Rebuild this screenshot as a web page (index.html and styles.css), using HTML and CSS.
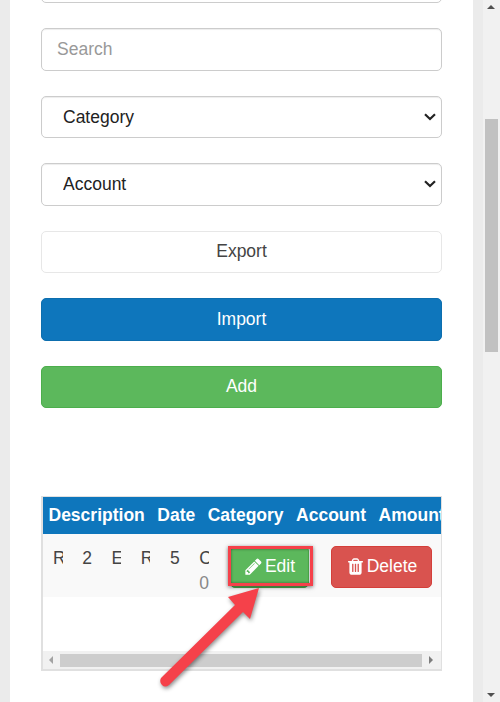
FILE: index.html
```html
<!DOCTYPE html>
<html lang="en">
<head>
    <meta charset="UTF-8">
    <meta name="viewport" content="width=device-width, initial-scale=1.0">
    <title>Transactions</title>
    <link rel="stylesheet" href="styles.css">
</head>
<body>
  <div class="page">
    <div class="card">
      <div class="controls">
        <input class="field" type="text">
        <input class="field search" type="text" placeholder="Search">
        <div class="choice-wrap">
          <select class="field choice"><option>Category</option></select>
          <svg class="chevron" viewBox="0 0 12 8"><path d="M1 1.2 L6 6 L11 1.2"/></svg>
        </div>
        <div class="choice-wrap">
          <select class="field choice"><option>Account</option></select>
          <svg class="chevron" viewBox="0 0 12 8"><path d="M1 1.2 L6 6 L11 1.2"/></svg>
        </div>
        <button class="btn btn-export">Export</button>
        <button class="btn btn-import">Import</button>
        <button class="btn btn-add">Add</button>
      </div>

      <div class="table-box">
        <div class="table-scroll">
          <table class="head-table">
            <thead>
              <tr><th>Description</th><th>Date</th><th>Category</th><th>Account</th><th>Amount</th></tr>
            </thead>
          </table>
          <table class="body-table">
            <tbody>
              <tr>
                <td class="narrow"><div class="cut">R</div></td>
                <td class="narrow"><div class="cut">2</div></td>
                <td class="narrow"><div class="cut">E</div></td>
                <td class="narrow"><div class="cut">R</div></td>
                <td class="narrow"><div class="cut">5</div></td>
                <td class="narrow"><div class="cut">C</div><div class="cut muted">0</div></td>
                <td class="actions">
                  <div class="action-row">
                    <button class="row-btn row-edit">
                      <svg class="icon" viewBox="0 0 1792 1792"><path d="M491 1536l91-91-235-235-91 91v107h128v128h107zm523-928q0-22-22-22-10 0-17 7l-542 542q-7 7-7 17 0 22 22 22 10 0 17-7l542-542q7-7 7-17zm-54-192l416 416-832 832h-416v-416zm683 96q0 53-37 90l-166 166-416-416 166-165q36-38 90-38 53 0 91 38l235 234q37 39 37 91z"/></svg>
                      Edit
                    </button>
                    <button class="row-btn row-delete">
                      <svg class="icon" viewBox="0 0 1792 1792"><path d="M704 1376v-704q0-14-9-23t-23-9h-64q-14 0-23 9t-9 23v704q0 14 9 23t23 9h64q14 0 23-9t9-23zm256 0v-704q0-14-9-23t-23-9h-64q-14 0-23 9t-9 23v704q0 14 9 23t23 9h64q14 0 23-9t9-23zm256 0v-704q0-14-9-23t-23-9h-64q-14 0-23 9t-9 23v704q0 14 9 23t23 9h64q14 0 23-9t9-23zm-544-992h448l-48-117q-7-9-17-11h-317q-10 2-17 11zm928 32v64q0 14-9 23t-23 9h-96v948q0 83-47 143.5t-113 60.5h-832q-66 0-113-58.5t-47-141.5v-952h-96q-14 0-23-9t-9-23v-64q0-14 9-23t23-9h309l70-167q15-37 54-63t79-26h320q40 0 79 26t54 63l70 167h309q14 0 23 9t9 23z"/></svg>
                      Delete
                    </button>
                  </div>
                </td>
              </tr>
            </tbody>
          </table>
        </div>
        <div class="hbar">
          <span class="tri tri-left"></span>
          <div class="hbar-thumb"></div>
          <span class="tri tri-right"></span>
        </div>
      </div>
    </div>

    <div class="vbar">
      <span class="tri tri-up"></span>
      <div class="vbar-thumb"></div>
      <span class="tri tri-down"></span>
    </div>

    <!-- annotation drawn over the screenshot -->
    <div class="mark-box"></div>
    <svg class="mark-arrow" width="500" height="702" viewBox="0 0 500 702">
      <path d="M259 588 L228 597 L235 605 L161 678 Q159 682 162 685 Q165 688 169 685 L243 612 L250 619 Z"/>
    </svg>
  </div>
</body>
</html>
```

FILE: styles.css
```css
* {
  box-sizing: border-box;
}
html, body {
  height: 100%;
}
body {
  margin: 0;
  background-color: #ebebeb;
  font-family: "Liberation Sans", Arial, sans-serif;
  font-size: 17.5px;
  line-height: 25px;
  color: #333;
  overflow: hidden;
}

.page {
  position: relative;
  display: flex;
  justify-content: space-between;
  height: 702px;
  overflow: hidden;
}
.card {
  width: 463px;
  height: 702px;
  margin-left: 10px;
  padding: 0 31px;
  background: #fff;
}

.controls {
  display: flex;
  flex-direction: column;
  gap: 25px;
  margin-top: -39.5px;
}
.field {
  display: block;
  width: 100%;
  height: 42.5px;
  padding: 0 15px;
  border: 1px solid #ccc;
  border-radius: 5px;
  background: #fff;
  color: #222;
  font-family: inherit;
  font-size: 17.5px;
  box-shadow: inset 0 1px 1px rgba(0, 0, 0, 0.075);
}
.field::placeholder {
  color: #999;
}
.choice-wrap {
  position: relative;
}
.choice {
  appearance: none;
  padding: 0 21px;
}
.chevron {
  position: absolute;
  top: 17px;
  right: 6px;
  width: 12px;
  height: 8px;
  fill: none;
  stroke: #222;
  stroke-width: 2.2;
  pointer-events: none;
}

.btn {
  width: 100%;
  height: 42.5px;
  border: 1px solid transparent;
  border-radius: 5px;
  font-family: inherit;
  font-size: 17.5px;
  cursor: pointer;
}
.btn-export {
  background: #fff;
  border-color: #e7e7e7;
  color: #444;
}
.btn-import {
  background: #0e76bc;
  border-color: #0d6eae;
  color: #fff;
}
.btn-add {
  background: #5cb85c;
  border-color: #4cae4c;
  color: #fff;
}

.table-box {
  display: flex;
  flex-direction: column;
  height: 175px;
  margin-top: 88px;
  border: 2px solid #e0e0e0;
  border-right-width: 1px;
  border-top-width: 1px;
}
.table-scroll {
  flex: 1;
  overflow: hidden;
}
.head-table {
  width: max-content;
  margin-left: -0.75px;
  border-collapse: collapse;
  background: #0e76bc;
  box-shadow: -1px 0 0 #0e76bc;
}
.head-table th {
  height: 37px;
  padding: 0 6.25px;
  color: #fff;
  font-weight: bold;
  white-space: nowrap;
}
.body-table {
  width: 100%;
  border-collapse: collapse;
  table-layout: fixed;
  background: #f9f9f9;
}
.body-table td {
  padding: 12px 10px 1px;
  vertical-align: top;
}
.body-table .narrow {
  width: 29.25px;
}
.body-table .actions {
  padding-left: 11.5px;
  padding-right: 0;
}
.cut {
  width: 9.5px;
  overflow: hidden;
  color: #444;
}
.muted {
  color: #888;
}
.action-row {
  display: flex;
  gap: 22px;
}
.row-btn {
  display: flex;
  flex: none;
  align-items: center;
  justify-content: center;
  gap: 2px;
  height: 42px;
  padding: 0 0 2px;
  border: 1px solid transparent;
  border-radius: 5px;
  color: #fff;
  font-family: inherit;
  font-size: 17.5px;
  cursor: pointer;
}
.row-edit {
  width: 79px;
  background: #5cb85c;
  border-color: #4cae4c;
}
.row-delete {
  width: 101px;
  background: #d9534f;
  border-color: #d43f3a;
}
.icon {
  width: 19px;
  height: 19px;
  fill: #fff;
}

.hbar {
  display: flex;
  align-items: center;
  height: 18px;
  padding: 0 8px 0 6px;
  background: #f1f1f1;
}
.hbar-thumb {
  flex: none;
  width: 362px;
  height: 13px;
  margin: 0 7px;
  background: #cdcdcd;
}

.vbar {
  position: relative;
  width: 17px;
  height: 702px;
  background: #f1f1f1;
}
.vbar-thumb {
  position: absolute;
  top: 119px;
  left: 2px;
  width: 13px;
  height: 233px;
  background: #c1c1c1;
}

.tri {
  display: block;
  width: 0;
  height: 0;
  border: 4px solid transparent;
}
.tri-left {
  border-left-width: 0;
  border-right: 4px solid #a3a3a3;
}
.tri-right {
  border-right-width: 0;
  border-left: 4px solid #7d7d7d;
}
.tri-up,
.tri-down {
  position: absolute;
  left: 4px;
}
.tri-up {
  top: 5px;
  border-top-width: 0;
  border-bottom: 4px solid #505050;
}
.tri-down {
  bottom: 5px;
  border-bottom-width: 0;
  border-top: 4px solid #505050;
}

.mark-box {
  position: absolute;
  top: 546px;
  left: 228px;
  width: 85px;
  height: 40px;
  border: 3px solid #f5414a;
  box-shadow: 0 1px 4px rgba(0, 0, 0, 0.55), inset 0 0 3px rgba(0, 0, 0, 0.45);
}
.mark-arrow {
  position: absolute;
  top: 0;
  left: 0;
  fill: #f5414a;
  filter: drop-shadow(1px 2px 2px rgba(0, 0, 0, 0.45));
}
```
